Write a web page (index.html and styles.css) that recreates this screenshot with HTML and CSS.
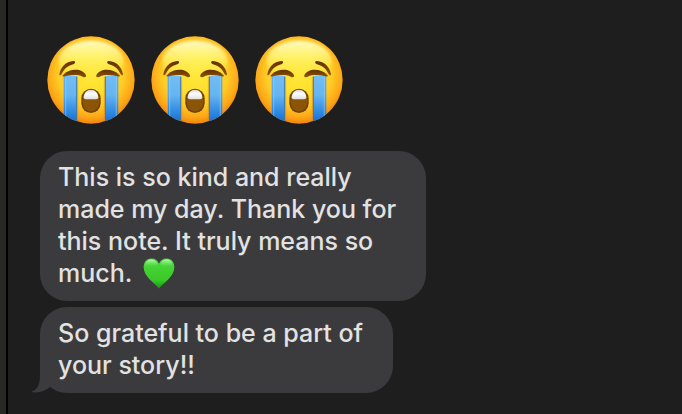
FILE: index.html
```html
<!DOCTYPE html>
<html lang="en">
<head>
<meta charset="utf-8">
<meta name="viewport" content="width=device-width, initial-scale=1">
<title>Messages</title>
<link rel="stylesheet" href="styles.css">
</head>
<body>
<svg class="defs" aria-hidden="true">
  <defs>
    <radialGradient id="face" gradientUnits="userSpaceOnUse" cx="153" cy="132" r="152">
      <stop offset="0" stop-color="#ffe838"/>
      <stop offset=".4" stop-color="#ffdf30"/>
      <stop offset=".65" stop-color="#ffcb25"/>
      <stop offset=".85" stop-color="#fda718"/>
      <stop offset="1" stop-color="#ef800c"/>
    </radialGradient>
    <linearGradient id="shine" x1="0" y1="0" x2="0" y2="1">
      <stop offset="0" stop-color="#fffdd0" stop-opacity=".95"/>
      <stop offset=".4" stop-color="#fffa80" stop-opacity=".7"/>
      <stop offset="1" stop-color="#ffee40" stop-opacity="0"/>
    </linearGradient>
    <linearGradient id="tear" gradientUnits="userSpaceOnUse" x1="0" y1="138" x2="0" y2="280">
      <stop offset="0" stop-color="#72bdf2"/>
      <stop offset=".4" stop-color="#65b5f2"/>
      <stop offset=".75" stop-color="#318be2"/>
      <stop offset="1" stop-color="#126bd0"/>
    </linearGradient>
    <linearGradient id="teeth" x1="0" y1="0" x2="0" y2="1">
      <stop offset="0" stop-color="#d8d5d2"/>
      <stop offset=".4" stop-color="#ffffff"/>
      <stop offset="1" stop-color="#e0deda"/>
    </linearGradient>
    <linearGradient id="brow" x1="0" y1="0" x2="0" y2="1">
      <stop offset="0" stop-color="#633000"/>
      <stop offset="1" stop-color="#8f5503"/>
    </linearGradient>
    <filter id="soft" x="-20%" y="-20%" width="140%" height="140%"><feGaussianBlur stdDeviation="5"/></filter>
    <clipPath id="round"><circle cx="153" cy="150" r="131"/></clipPath>
    <symbol id="crying" viewBox="21 18 264 264">
      <circle cx="153" cy="150" r="131" fill="url(#face)"/>
      <g clip-path="url(#round)">
        <ellipse cx="153" cy="94" rx="98" ry="62" fill="url(#shine)" filter="url(#soft)"/>
        <path d="M72 137Q91 134 111 139V284H72Z" fill="url(#tear)"/>
        <path d="M195 139Q215 134 234 137V284H195Z" fill="url(#tear)"/>
        <path d="M77 142V270M229 142V270" stroke="#98d5fa" stroke-opacity=".4" stroke-width="4"/>
        <path d="M72 140V284M234 140V284" stroke="#277fd0" stroke-opacity=".65" stroke-width="2"/>
        <path d="M110 140V284M196 140V284" stroke="#4778a0" stroke-width="3"/>
        <path d="M113 140V284M193 140V284" stroke="#dc7a0a" stroke-opacity=".65" stroke-width="2"/>
      </g>
      <path d="M58 134C61 111 77 95 101 93C108 94 106 100 100 103C82 108 73 117 65 132C62 137 57 137 58 134Z" fill="url(#brow)"/>
      <path d="M249 134C246 111 230 95 206 93C199 94 201 100 207 103C225 108 234 117 242 132C245 137 250 137 249 134Z" fill="url(#brow)"/>
      <path d="M70 134C88 114 129 114 138 136C140 142 133 143 128 140C112 133 92 135 75 139C67 141 65 137 70 134Z" fill="url(#brow)"/>
      <path d="M237 134C219 114 178 114 169 136C167 142 174 143 179 140C195 133 215 135 232 139C240 141 242 137 237 134Z" fill="url(#brow)"/>
      <rect x="124" y="176" width="58" height="73" rx="29" fill="#744306"/>
      <rect x="129" y="182" width="48" height="62" rx="24" fill="#8b5407"/>
      <path d="M131 202C132 188 141 179 153 179S174 188 175 202Q175 208 168 208H138Q131 208 131 202Z" fill="url(#teeth)"/>
    </symbol>
    <linearGradient id="green" x1="0" y1="0" x2="0" y2="1">
      <stop offset="0" stop-color="#52dc45"/>
      <stop offset=".3" stop-color="#44d234"/>
      <stop offset=".7" stop-color="#3bca29"/>
      <stop offset="1" stop-color="#129c10"/>
    </linearGradient>
    <linearGradient id="gloss" x1="0" y1="0" x2="0" y2="1">
      <stop offset="0" stop-color="#d2ffca" stop-opacity=".8"/>
      <stop offset="1" stop-color="#72ed60" stop-opacity="0"/>
    </linearGradient>
  </defs>
</svg>
<main class="conversation">
  <div class="reactions">
    <svg class="emoji" role="img" aria-label="Loudly crying face"><use href="#crying"/></svg>
    <svg class="emoji" role="img" aria-label="Loudly crying face"><use href="#crying"/></svg>
    <svg class="emoji" role="img" aria-label="Loudly crying face"><use href="#crying"/></svg>
  </div>
  <p class="bubble">This is so kind and really<br>made my day. Thank you for<br>this note. It truly means so<br>much. <svg class="heart" viewBox="0 0 96 92" role="img" aria-label="Green heart">
    <path d="M48 91C38 75 2 57 2 27C2 10 12 1 26 1C37 1 44 7 48 17C52 7 59 1 70 1C84 1 94 10 94 27C94 57 58 75 48 91Z" fill="url(#green)"/>
    <path d="M7 23C7 9 16 4 26 4C36 4 42 11 44 19C32 26 18 29 7 23ZM89 23C89 9 80 4 70 4C60 4 54 11 52 19C64 26 78 29 89 23Z" fill="url(#gloss)"/>
  </svg></p>
  <p class="bubble">So grateful to be a part of<br>your story!!<svg class="tail" viewBox="0 0 30 30" aria-hidden="true"><path d="M9 0V14Q9 26 0 29Q11 31 19 24L30 10Z"/></svg></p>
</main>
</body>
</html>
```
FILE: styles.css
```css
* {
  box-sizing: border-box;
}

body {
  margin: 0;
  background: #282827;
  color: #e2e2e2;
  font: 500 25px/32px Inter, "Liberation Sans", sans-serif;
}

.defs {
  position: absolute;
  width: 0;
  height: 0;
}

.conversation {
  display: flex;
  flex-direction: column;
  align-items: flex-start;
  gap: 6px;
  min-height: 100vh;
  margin-left: 6px;
  padding: 36px 32px 20px;
  border-left: 2px solid #000;
  background: #1e1e1e;
}

.reactions {
  display: flex;
  gap: 16px;
  margin: 0 7px 21px;
}

.emoji {
  width: 88px;
  height: 88px;
}

.bubble {
  position: relative;
  margin: 0;
  padding: 10px 30px 12px 18px;
  border-radius: 27px;
  background: #3b3b3d;
}

.heart {
  width: 32px;
  height: 31px;
  margin-left: 4px;
  vertical-align: -7px;
}

.tail {
  position: absolute;
  bottom: 0;
  left: -9px;
  width: 30px;
  height: 30px;
  fill: #3b3b3d;
}
```
